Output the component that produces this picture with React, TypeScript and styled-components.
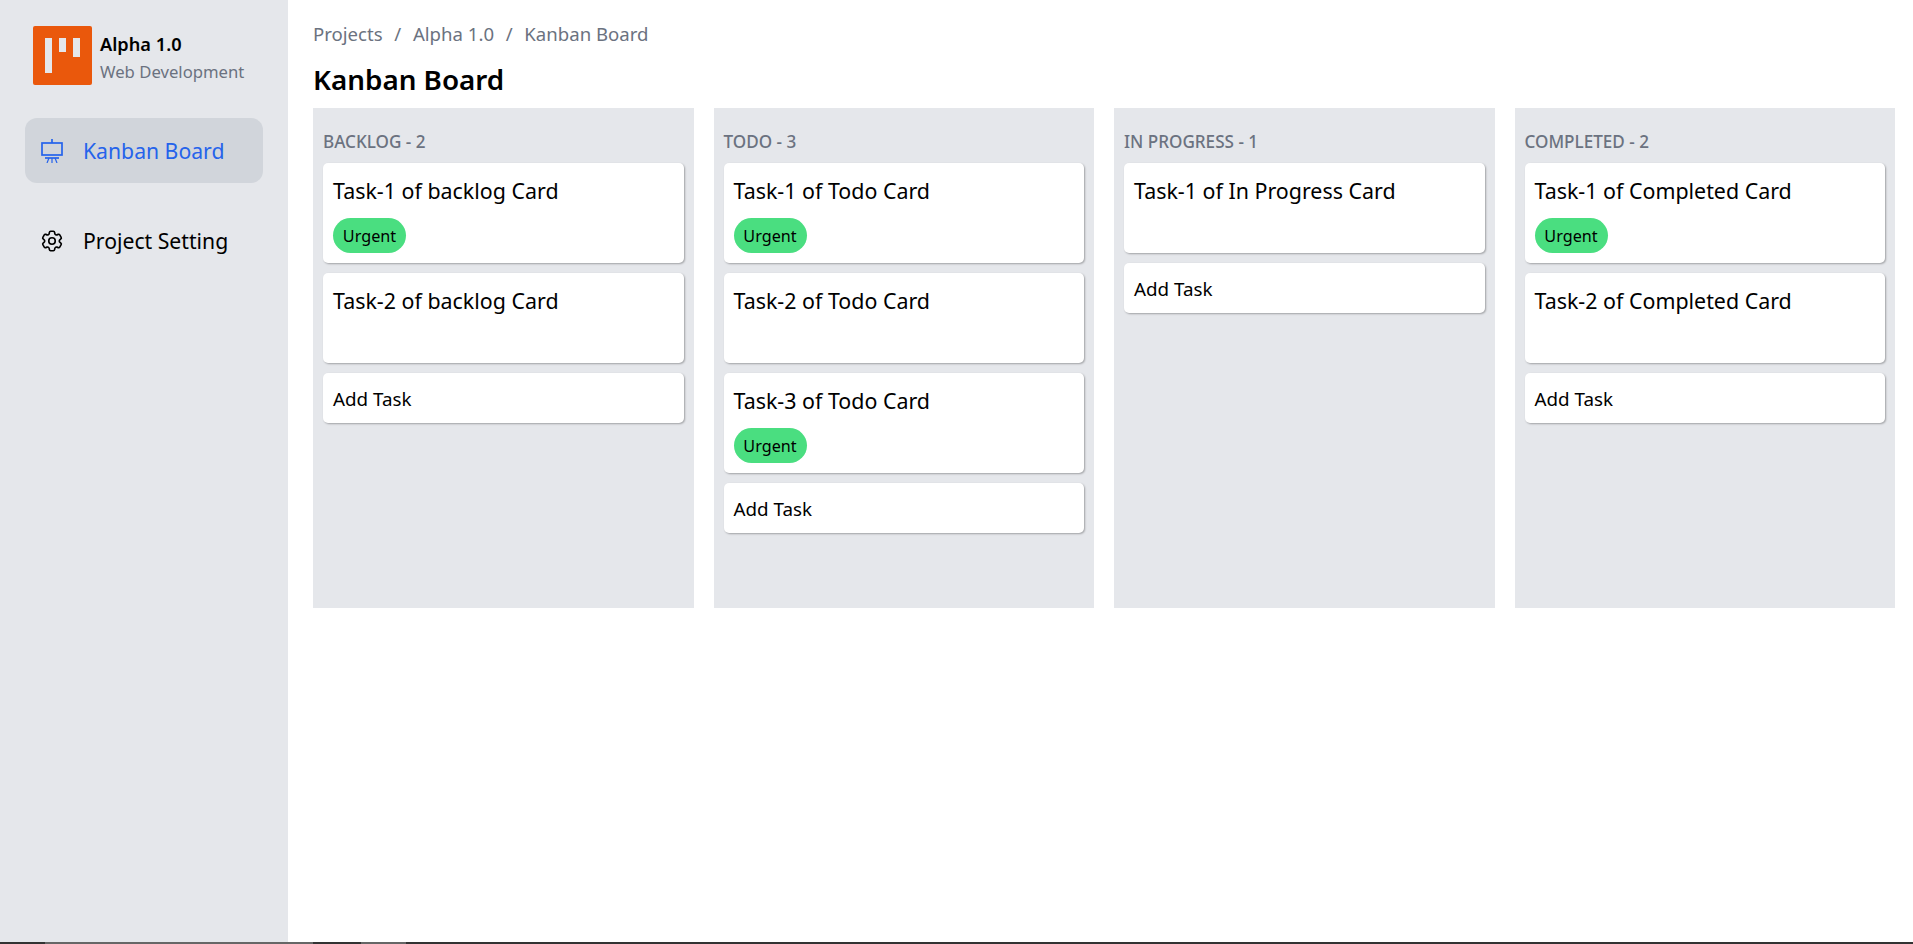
import React from "react";
import styled, { createGlobalStyle } from "styled-components";
import { HiOutlineCog6Tooth } from "react-icons/hi2";

const Global = createGlobalStyle`
  html, body { margin: 0; padding: 0; height: 100%; background: #fff; }
  body { font-family: "Noto Sans", "Open Sans", sans-serif; color: #000; overflow: hidden; }
`;
const Page = styled.div`
  display: flex; flex-direction: column; height: 944px;
`;
const Shell = styled.div`
  display: flex; height: 942px;
`;
const Strip = styled.div`
  display: flex; height: 2px; background: #333; padding-left: 45px;
`;
const StripThumb = styled.div<{ $w: number; $ml: number }>`
  width: ${p => p.$w}px; margin-left: ${p => p.$ml}px; background: #666;
`;
const Sidebar = styled.aside`
  width: 288px; background: #e5e7eb; padding: 26px 25px 0; box-sizing: border-box; flex: none;
`;
const Brand = styled.div`
  display: flex; align-items: flex-start; gap: 8px; padding-left: 8px; height: 59px;
`;
const BrandText = styled.div`
  padding-top: 4px;
`;
const BrandName = styled.div`
  font-size: 18.2px; font-weight: 600; line-height: 28px;
`;
const BrandSub = styled.div`
  font-size: 16.7px; color: #6b7280; line-height: 28px;
`;
const Nav = styled.nav`
  display: flex; flex-direction: column; gap: 25px; margin-top: 33px;
`;
const NavItem = styled.div<{ $active?: boolean }>`
  display: flex; align-items: center; gap: 21px; height: 65px; padding-left: 16px;
  border-radius: 12px; font-size: 21.2px;
  background: ${p => (p.$active ? "#d1d5db" : "transparent")};
  color: ${p => (p.$active ? "#2563eb" : "#000")};
`;
const IconSlot = styled.span`
  display: flex; align-items: center; justify-content: center; width: 21px; flex: none;
  svg { flex: none; }
`;
const Main = styled.main`
  flex: 1; padding: 21px 18px 0 25px; min-width: 0;
`;
const Crumbs = styled.div`
  display: flex; gap: 11.7px; font-size: 18.6px; line-height: 25px; color: #6b7280;
`;
const Title = styled.h1`
  margin: 14px 0 0; font-size: 27.8px; line-height: 38px; font-weight: 600;
`;
const Board = styled.div`
  display: grid; grid-template-columns: repeat(4, 1fr); gap: 20px; margin-top: 10px;
`;
const Column = styled.section`
  height: 500px; background: #e5e7eb; padding: 10px; box-sizing: border-box;
  display: flex; flex-direction: column; gap: 10px;
`;
const ColumnTitle = styled.h2`
  margin: 10px 0 0; padding-top: 1px; height: 25px; box-sizing: border-box;
  font-size: 17.1px; line-height: 25px; font-weight: 500; color: #6b7280; text-transform: uppercase;
`;
const Card = styled.div`
  background: #fff; border-radius: 5px; box-shadow: 1px 1px 2px rgba(0,0,0,.3);
  padding: 10px; box-sizing: border-box;
`;
const TaskCard = styled(Card)<{ $tall: boolean }>`
  height: ${p => (p.$tall ? 100 : 90)}px;
  display: flex; flex-direction: column; align-items: flex-start;
`;
const TaskTitle = styled.div`
  font-size: 21.4px; line-height: 36px;
`;
const Badge = styled.span`
  display: flex; align-items: center; justify-content: center; margin-top: 9px;
  width: 73px; height: 35px; border-radius: 18px; background: #4ade80; font-size: 16.2px;
`;
const AddTask = styled(Card)`
  height: 50px; padding: 1px 10px 0; display: flex; align-items: center; font-size: 18.8px;
`;

const Logo = () => (
  <svg width="59" height="59" viewBox="0 0 59 59" style={{ flex: "none" }}>
    <rect width="59" height="59" rx="2" fill="#ea580c" />
    <rect x="12" y="12" width="7" height="35" fill="#e5e7eb" />
    <rect x="26" y="12" width="7" height="14" fill="#e5e7eb" />
    <rect x="40" y="12" width="7" height="19" fill="#e5e7eb" />
  </svg>
);
const Easel = () => (
  <svg width="22" height="24" viewBox="0 0 22 24" fill="none" stroke="currentColor" strokeWidth="1.7">
    <path d="M11 0v4" />
    <rect x="1" y="4" width="20" height="12" />
    <path d="M4 19h14" />
    <path d="M11 19v5M8 19l-2 5M14 19l2 5" strokeWidth="1.2" />
  </svg>
);

const columns = [
  { name: "Backlog", label: "backlog", tasks: [true, false] },
  { name: "Todo", label: "Todo", tasks: [true, false, true] },
  { name: "In Progress", label: "In Progress", tasks: [false] },
  { name: "Completed", label: "Completed", tasks: [true, false] },
];

export default function App() {
  return (
    <Page>
      <Global />
      <Shell>
        <Sidebar>
          <Brand>
            <Logo />
            <BrandText>
              <BrandName>Alpha 1.0</BrandName>
              <BrandSub>Web Development</BrandSub>
            </BrandText>
          </Brand>
          <Nav>
            <NavItem $active><IconSlot><Easel /></IconSlot>Kanban Board</NavItem>
            <NavItem><IconSlot><HiOutlineCog6Tooth size={26} /></IconSlot>Project Setting</NavItem>
          </Nav>
        </Sidebar>
        <Main>
          <Crumbs>
            <span>Projects</span><span>/</span><span>Alpha 1.0</span><span>/</span><span>Kanban Board</span>
          </Crumbs>
          <Title>Kanban Board</Title>
          <Board>
            {columns.map(c => (
              <Column key={c.name}>
                <ColumnTitle>{c.name} - {c.tasks.length}</ColumnTitle>
                {c.tasks.map((urgent, i) => (
                  <TaskCard key={i} $tall={urgent}>
                    <TaskTitle>Task-{i + 1} of {c.label} Card</TaskTitle>
                    {urgent && <Badge>Urgent</Badge>}
                  </TaskCard>
                ))}
                <AddTask>Add Task</AddTask>
              </Column>
            ))}
          </Board>
        </Main>
      </Shell>
      <Strip>
        <StripThumb $w={268} $ml={0} />
        <StripThumb $w={45} $ml={48} />
      </Strip>
    </Page>
  );
}
